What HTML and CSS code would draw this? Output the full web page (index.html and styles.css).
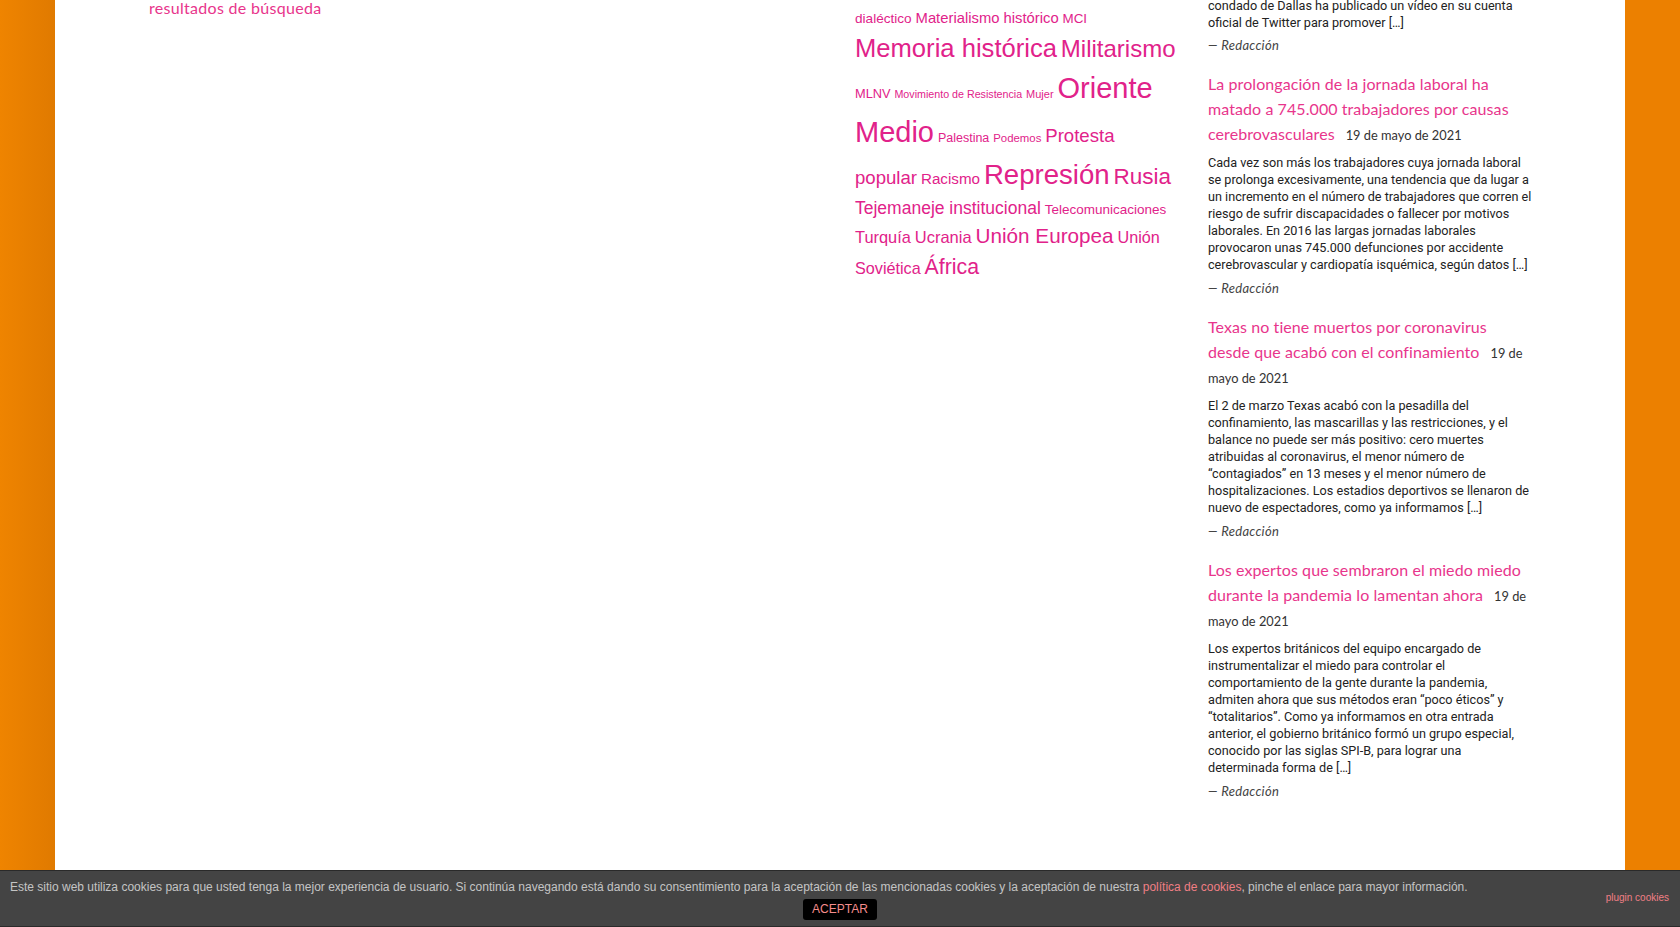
FILE: index.html
```html
<!DOCTYPE html>
<html lang="es">
<head>
<meta charset="utf-8">
<title>Resultados de búsqueda</title>
<link rel="stylesheet" href="styles.css">
</head>
<body>
<div class="page">
  <main class="main-col">
    <p class="notice">resultados de búsqueda</p>
  </main>

  <aside class="tag-col">
    <div class="tagcloud">
      <a href="#" style="font-size:13.6px">dialéctico</a>
      <a href="#" style="font-size:14.8px">Materialismo histórico</a>
      <a href="#" style="font-size:13.4px">MCI</a>
      <a href="#" style="font-size:25.6px">Memoria histórica</a>
      <a href="#" style="font-size:24px">Militarismo</a>
      <a href="#" style="font-size:12.8px">MLNV</a>
      <a href="#" style="font-size:10.7px">Movimiento de Resistencia</a>
      <a href="#" style="font-size:11px">Mujer</a>
      <a href="#" style="font-size:29px">Oriente Medio</a>
      <a href="#" style="font-size:12.5px">Palestina</a>
      <a href="#" style="font-size:11.4px">Podemos</a>
      <a href="#" style="font-size:18.6px">Protesta popular</a>
      <a href="#" style="font-size:15.2px">Racismo</a>
      <a href="#" style="font-size:27.6px">Represión</a>
      <a href="#" style="font-size:22.5px">Rusia</a>
      <a href="#" style="font-size:17.5px">Tejemaneje institucional</a>
      <a href="#" style="font-size:13.5px">Telecomunicaciones</a>
      <a href="#" style="font-size:16.4px">Turquía</a>
      <a href="#" style="font-size:16.5px">Ucrania</a>
      <a href="#" style="font-size:20.7px">Unión Europea</a>
      <a href="#" style="font-size:16.2px">Unión Soviética</a>
      <a href="#" style="font-size:21.3px">África</a>
    </div>
  </aside>

  <aside class="feed-col">
    <div class="post post-first">
      <p class="excerpt">condado de Dallas ha publicado un vídeo en su cuenta oficial de Twitter para promover […]</p>
      <p class="byline">— Redacción</p>
    </div>

    <div class="post">
      <h3 class="post-title"><a href="#">La prolongación de la jornada laboral ha matado a 745.000 trabajadores por causas cerebrovasculares</a><span class="post-date">19 de mayo de 2021</span></h3>
      <p class="excerpt">Cada vez son más los trabajadores cuya jornada laboral se prolonga excesivamente, una tendencia que da lugar a un incremento en el número de trabajadores que corren el riesgo de sufrir discapacidades o fallecer por motivos laborales. En 2016 las largas jornadas laborales provocaron unas 745.000 defunciones por accidente cerebrovascular y cardiopatía isquémica, según datos […]</p>
      <p class="byline">— Redacción</p>
    </div>

    <div class="post">
      <h3 class="post-title"><a href="#">Texas no tiene muertos por coronavirus desde que acabó con el confinamiento</a><span class="post-date">19 de mayo de 2021</span></h3>
      <p class="excerpt">El 2 de marzo Texas acabó con la pesadilla del confinamiento, las mascarillas y las restricciones, y el balance no puede ser más positivo: cero muertes atribuidas al coronavirus, el menor número de “contagiados” en 13 meses y el menor número de hospitalizaciones. Los estadios deportivos se llenaron de nuevo de espectadores, como ya informamos […]</p>
      <p class="byline">— Redacción</p>
    </div>

    <div class="post">
      <h3 class="post-title"><a href="#">Los expertos que sembraron el miedo miedo durante la pandemia lo lamentan ahora</a><span class="post-date">19 de mayo de 2021</span></h3>
      <p class="excerpt">Los expertos británicos del equipo encargado de instrumentalizar el miedo para controlar el comportamiento de la gente durante la pandemia, admiten ahora que sus métodos eran “poco éticos” y “totalitarios”. Como ya informamos en otra entrada anterior, el gobierno británico formó un grupo especial, conocido por las siglas SPI-B, para lograr una determinada forma de […]</p>
      <p class="byline">— Redacción</p>
    </div>
  </aside>
</div>

<div class="cookie-bar">
  <p class="cookie-text">Este sitio web utiliza cookies para que usted tenga la mejor experiencia de usuario. Si continúa navegando está dando su consentimiento para la aceptación de las mencionadas cookies y la aceptación de nuestra <a href="#" class="cookie-link">política de cookies</a>, pinche el enlace para mayor información.</p>
  <div class="cookie-actions"><a href="#" class="cookie-btn">ACEPTAR</a></div>
  <a href="#" class="cookie-plugin">plugin cookies</a>
</div>
</body>
</html>
```

FILE: styles.css
```css
* { box-sizing: border-box; }

html, body {
  margin: 0;
  padding: 0;
}

body {
  height: 927px;
  overflow: hidden;
  background: linear-gradient(to right, #ef8400 0px, #e07a00 55px, #ec8000 55px, #ec8000 100%);
  font-family: Roboto, "Liberation Sans", Arial, sans-serif;
}

a { text-decoration: none; }

.page {
  width: 1570px;
  min-height: 927px;
  margin: 0 auto;
  background: #fff;
  padding: 0 93px 0 94px;
  display: grid;
  grid-template-columns: 1fr 324px 324px;
  column-gap: 29px;
  align-items: start;
}

/* main column */
.notice {
  margin: -2px 0 0;
  font-family: Lato, "Open Sans", sans-serif;
  font-size: 16px;
  line-height: 20px;
  letter-spacing: 0.3px;
  color: #e8358c;
}

/* tag cloud */
.tagcloud {
  margin-top: 7px;
  font-family: "Liberation Sans", Arial, sans-serif;
  font-size: 14px;
  line-height: 1.49;
}

.tagcloud a {
  color: #e1228a;
}

/* recent posts */
.feed-col {
  margin-top: -3px;
}

.post {
  margin-top: 16.5px;
}

.post-first {
  margin-top: 0;
}

.post-title {
  margin: 0 0 8.5px;
  font-family: Lato, "Open Sans", sans-serif;
  font-weight: 400;
  font-size: 16px;
  line-height: 25px;
  letter-spacing: 0.08px;
}

.post-title a {
  color: #e8358c;
}

.post-date {
  margin-left: 11px;
  font-size: 12.8px;
  line-height: 1;
  letter-spacing: 0;
  color: #333;
}

.excerpt {
  margin: 0;
  font-family: Roboto, "Liberation Sans", sans-serif;
  font-size: 12.65px;
  line-height: 17px;
  color: #222;
}

.byline {
  margin: 7px 0 0;
  font-family: Lato, "Open Sans", sans-serif;
  font-style: italic;
  font-size: 13px;
  line-height: 17px;
  letter-spacing: 0.3px;
  color: #444;
}

.post-first .byline {
  margin-top: 6px;
}

/* cookie notice */
.cookie-bar {
  position: fixed;
  left: 0;
  right: 0;
  bottom: 0;
  height: 57px;
  padding: 8px 10px 0;
  background: #444;
  border-top: 1px solid #2a2a2a;
  border-bottom: 1px solid #2a2a2a;
  font-family: "Liberation Sans", Arial, sans-serif;
  font-size: 12px;
  color: #c4c4c4;
}

.cookie-text {
  margin: 0;
  line-height: 17px;
}

.cookie-link {
  color: #f07f84;
}

.cookie-actions {
  margin-top: 3px;
  text-align: center;
}

.cookie-btn {
  display: inline-block;
  height: 21px;
  padding: 0 9px;
  line-height: 21px;
  border-radius: 3px;
  background: #000;
  color: #f48c8c;
  font-size: 12px;
}

.cookie-plugin {
  position: absolute;
  right: 11px;
  top: 21px;
  font-size: 10px;
  line-height: 12px;
  color: #f07f84;
}
```
